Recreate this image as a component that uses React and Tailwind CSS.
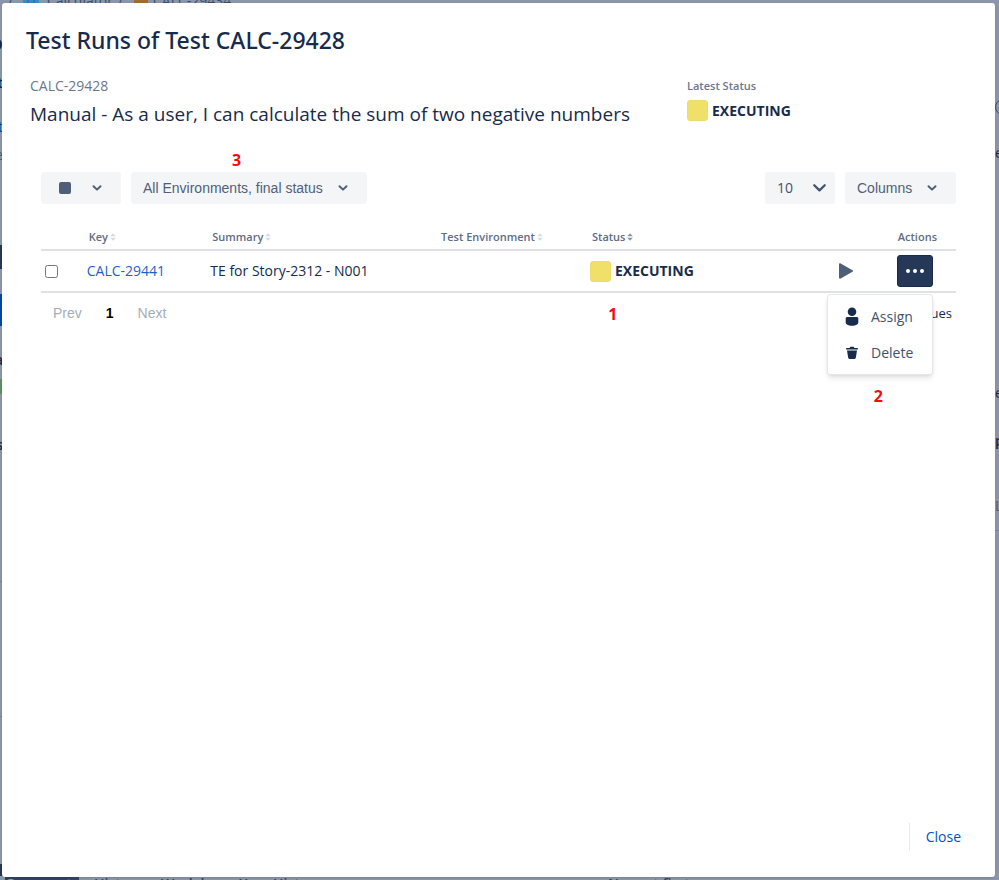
import { MoreHorizontal } from "lucide-react";

const breadcrumbText = "text-sm leading-5 text-[#3f4f6b]";

function Chevron({ className, strokeWidth = 2 }) {
  return (
    <svg viewBox="0 0 10 8" className={className} fill="none" stroke="currentColor" aria-hidden="true">
      <path d="M1.5 2.2 5 5.6 8.5 2.2" strokeWidth={strokeWidth} strokeLinecap="round" strokeLinejoin="round" />
    </svg>
  );
}

function SortIcon({ active }) {
  return (
    <svg
      viewBox="0 0 6 8"
      className={active ? "h-2 w-[6px] text-[#8993a4]" : "h-2 w-[6px] text-[#d5d9e0]"}
      fill="currentColor"
      aria-hidden="true"
    >
      <path d="M3 0.2 5.8 3.2H0.2Z" />
      <path d="M3 7.8 5.8 4.8H0.2Z" />
    </svg>
  );
}

function PersonIcon() {
  return (
    <svg viewBox="0 0 14 20" className="h-5 w-[14px]" fill="currentColor" aria-hidden="true">
      <circle cx="7" cy="4.8" r="4.3" />
      <path d="M2.400 10h9.200c1 0 1.700.7 1.700 1.700v3.900c0 2-2.900 3.200-6.300 3.200S.7 17.600.7 15.600v-3.900c0-1 .7-1.700 1.700-1.700Z" />
    </svg>
  );
}

function TrashIcon() {
  return (
    <svg viewBox="0 0 14 14" className="h-[14px] w-[14px]" fill="currentColor" aria-hidden="true">
      <path d="M4.8 2V1.500c0-.5.3-.8.8-.8h2.800c.5 0 .8.3.8.8V2h3c.5 0 .8.300.8.7v.7H1v-.7c0-.4.300-.7.8-.7Z" />
      <path d="M2 4.500h10l-1.200 7.300c-.1.700-.6 1.200-1.300 1.200h-5c-.7 0-1.200-.5-1.300-1.200Z" />
    </svg>
  );
}

function Status({ label }) {
  return (
    <div className="flex items-center gap-1">
      <span className="h-[21px] w-[21px] rounded-[3px] border border-[#ebdc6c] bg-[#f0df68]" />
      <span className="text-sm font-bold leading-5 text-[#172b4d]">{label}</span>
    </div>
  );
}

function Marker({ children, className }) {
  return (
    <span className={`absolute font-['Open_Sans',sans-serif] text-base font-bold leading-5 text-[#f50a0f] ${className}`}>
      {children}
    </span>
  );
}

function IssuePage() {
  return (
    <div aria-hidden="true" className="absolute inset-0 flex flex-col overflow-hidden bg-[#8c96aa]">
      <div className="-mt-[9px] flex h-5 shrink-0 items-center pl-2">
        <span className={`w-[15px] ${breadcrumbText}`}>/</span>
        <span className="mr-2 flex h-4 w-4 items-center justify-center rounded-sm bg-[#2497c0]">
          <span className="h-3 w-2 rounded-full border-2 border-[#5b5fc0]" />
        </span>
        <span className={`w-[71px] ${breadcrumbText}`}>Calculator</span>
        <span className={`w-4 ${breadcrumbText}`}>/</span>
        <span className="mr-[5px] h-4 w-[14px] rounded-sm bg-[#a66b24]" />
        <span className={breadcrumbText}>CALC-29434</span>
      </div>

      <div className="flex min-h-0 flex-1 justify-between text-sm leading-5 text-[#172b4d]">
        <div className="flex w-[3px] flex-col items-end overflow-hidden">
          <span className="mt-[18px] text-xl font-semibold">Co</span>
          <span className="mt-4 font-semibold">Att</span>
          <span className="mt-6 text-[#0a3f8f]">Lint</span>
          <span className="mt-2 text-[#4a5d7c]">Cre</span>
          <span className="mt-20 h-6 w-2 shrink-0 bg-[#253858]" />
          <span className="mt-[25px] h-8 w-2 shrink-0 bg-[#0747a6]" />
          <span className="mt-6 font-semibold">a</span>
          <span className="mt-[9px] h-[15px] w-2 shrink-0 bg-[#5f8f62]" />
          <span className="mt-[41px] font-semibold">s</span>
          <span className="mt-[126px] h-px w-2 bg-[#7a859b]" />
          <span className="mt-[134px] h-px w-2 bg-[#7a859b]" />
          <span className="mt-auto h-3 w-2 bg-[#253858]" />
        </div>
        <div className="flex w-1 flex-col items-start overflow-hidden">
          <span className="mt-[88px] h-4 w-4 rounded-full border border-[#344b70]" />
          <span className="mt-7 h-5">e</span>
          <span className="mt-[220px] h-5">e</span>
          <span className="mt-7 h-5 font-semibold">p</span>
          <span className="mt-[45px] h-5 text-[#4a5d7c]">L</span>
          <span className="mt-[14px] h-px w-2 bg-[#7a859b]" />
        </div>
      </div>

      <div className="-mb-3 flex h-4 shrink-0 items-start text-sm font-semibold leading-4 text-[#344563]">
        <span className="ml-[5px] h-4 w-[74px] bg-[#344563] text-center text-[#9ba5b7]">Comments</span>
        <span className="ml-[15px] w-[67px]">History</span>
        <span className="w-[78px]">Work log</span>
        <span className="w-[369px]">Xray History</span>
        <span>Newest first ↓</span>
      </div>
    </div>
  );
}

export default function App() {
  const softButton =
    "flex h-8 items-center rounded-[3px] bg-[#f4f5f7] font-['Liberation_Sans',sans-serif] text-sm text-[#505f79]";
  const headings = ["Key", "Summary", "Test Environment", "Status"];

  return (
    <div className="relative flex min-h-screen flex-col bg-[#8c96aa] pt-[3px] pr-1 pb-[3px] pl-[2px] font-['Open_Sans',sans-serif] text-[#172b4d]">
      <IssuePage />

      <div
        role="dialog"
        aria-labelledby="dialog-title"
        className="relative flex flex-1 flex-col rounded-[3px] bg-white pt-[21px] pr-[39px] pb-[26px] pl-[39px] shadow-sm"
      >
        <h1 id="dialog-title" className="-ml-[15px] font-['Noto_Sans','Open_Sans',sans-serif] text-[23px] font-medium leading-8">
          Test Runs of Test CALC-29428
        </h1>

        <div className="-ml-[11px] mt-5 flex">
          <div className="w-[657px]">
            <div className="text-sm leading-5 text-[#6b778c]">CALC-29428</div>
            <h2 className="mt-1 text-[19px] leading-7">
              Manual - As a user, I can calculate the sum of two negative numbers
            </h2>
          </div>
          <div>
            <div className="text-[11px] font-semibold leading-5 text-[#6b778c]">Latest Status</div>
            <div className="mt-1">
              <Status label="EXECUTING" />
            </div>
          </div>
        </div>

        <div className="mt-11 flex items-center">
          <button type="button" aria-label="Select" className={`${softButton} w-20 justify-between pr-[19px] pl-[18px]`}>
            <span className="h-3 w-3 rounded-[2px] bg-[#505f79]" />
            <Chevron className="h-2 w-[10px]" />
          </button>
          <div className="relative ml-[10px]">
            <button type="button" className={`${softButton} w-[236px] justify-between pr-[19px] pl-3`}>
              All Environments, final status
              <Chevron className="h-2 w-[10px]" />
            </button>
            <Marker className="-top-[22px] left-[101px]">3</Marker>
          </div>
          <label className="relative ml-auto flex items-center text-[#42526e]">
            <select
              aria-label="Entries per page"
              defaultValue="10"
              className="h-8 w-[70px] appearance-none rounded-[3px] bg-[#f4f5f7] pl-3 text-sm"
            >
              <option>10</option>
              <option>25</option>
              <option>50</option>
            </select>
            <Chevron strokeWidth={1.5} className="pointer-events-none absolute right-2 h-3 w-[15px]" />
          </label>
          <button type="button" className={`${softButton} ml-[10px] w-[111px] justify-between pr-[19px] pl-3`}>
            Columns
            <Chevron className="h-2 w-[10px]" />
          </button>
        </div>

        <table className="mt-[21px] w-full table-fixed border-collapse text-left">
          <colgroup>
            <col className="w-[5%]" />
            <col className="w-[13.5%]" />
            <col className="w-[25%]" />
            <col className="w-[16.5%]" />
            <col />
            <col className="w-[14%]" />
          </colgroup>
          <thead>
            <tr className="h-[25px] border-b-2 border-[#dfe1e6] text-[11px] leading-4 text-[#5e6c84]">
              <td />
              {headings.map((heading) => (
                <th key={heading} className="p-0 font-semibold">
                  <button type="button" className="flex items-center gap-[2px] pl-[2px]">
                    {heading}
                    <SortIcon active={heading === "Status"} />
                  </button>
                </th>
              ))}
              <th className="p-0 pr-[19px] text-right font-semibold">Actions</th>
            </tr>
          </thead>
          <tbody>
            <tr className="h-[42px] border-b-2 border-[#dfe1e6] text-sm">
              <td className="p-0 pl-1">
                <input type="checkbox" aria-label="Select CALC-29441" className="block h-[13px] w-[13px]" />
              </td>
              <td className="p-0">
                <a href="#CALC-29441" className="text-[#1f5fcc]">
                  CALC-29441
                </a>
              </td>
              <td className="p-0">TE for Story-2312 - N001</td>
              <td />
              <td className="p-0">
                <Status label="EXECUTING" />
              </td>
              <td className="p-0">
                <div className="flex items-center justify-between pr-[23px] pl-[10px]">
                  <button type="button" aria-label="Execute">
                    <svg viewBox="0 0 16 16" className="h-4 w-4" fill="#505f79" aria-hidden="true">
                      <path d="M1 1.500c0-1 .8-1.500 1.700-1l11.800 6.700c.7.400.7 1.200 0 1.600L2.700 15.500c-.9.500-1.700 0-1.700-1Z" />
                    </svg>
                  </button>
                  <div className="relative">
                    <button
                      type="button"
                      aria-label="More actions"
                      className="flex h-8 w-9 items-center justify-center rounded-[3px] border border-[#172b4d] bg-[#253858] text-white"
                    >
                      <MoreHorizontal className="h-6 w-6" fill="currentColor" />
                    </button>
                    <div
                      role="menu"
                      className="absolute top-full right-0 z-10 mt-[7px] flex w-[106px] flex-col rounded-[3px] border border-[#e4e6ea] bg-white pt-1 pb-[3px] text-[#42526e] shadow-md"
                    >
                      <button type="button" role="menuitem" className="flex h-9 items-center gap-3 pl-[17px]">
                        <span className="text-[#172b4d]">
                          <PersonIcon />
                        </span>
                        Assign
                      </button>
                      <button type="button" role="menuitem" className="flex h-9 items-center gap-3 pl-[17px]">
                        <span className="text-[#172b4d]">
                          <TrashIcon />
                        </span>
                        Delete
                      </button>
                    </div>
                    <Marker className="top-[131px] right-[50px]">2</Marker>
                  </div>
                </div>
              </td>
            </tr>
          </tbody>
        </table>

        <div className="relative mt-[10px] flex items-center justify-between pr-1 pl-3 text-sm leading-5">
          <nav
            aria-label="Pagination"
            className="flex items-center gap-6 font-['Liberation_Sans',sans-serif] text-[#a5adba]"
          >
            <button type="button" disabled>
              Prev
            </button>
            <button type="button" aria-current="page" className="font-bold text-black">
              1
            </button>
            <button type="button" disabled>
              Next
            </button>
          </nav>
          <span className="text-[13px]">1 issues</span>
          <Marker className="left-[62%] top-px">1</Marker>
        </div>

        <div className="-mr-[5px] mt-auto flex justify-end">
          <button type="button" className="h-7 border-l border-[#deebff] pl-4 text-sm text-[#0052cc]">
            Close
          </button>
        </div>
      </div>
    </div>
  );
}
